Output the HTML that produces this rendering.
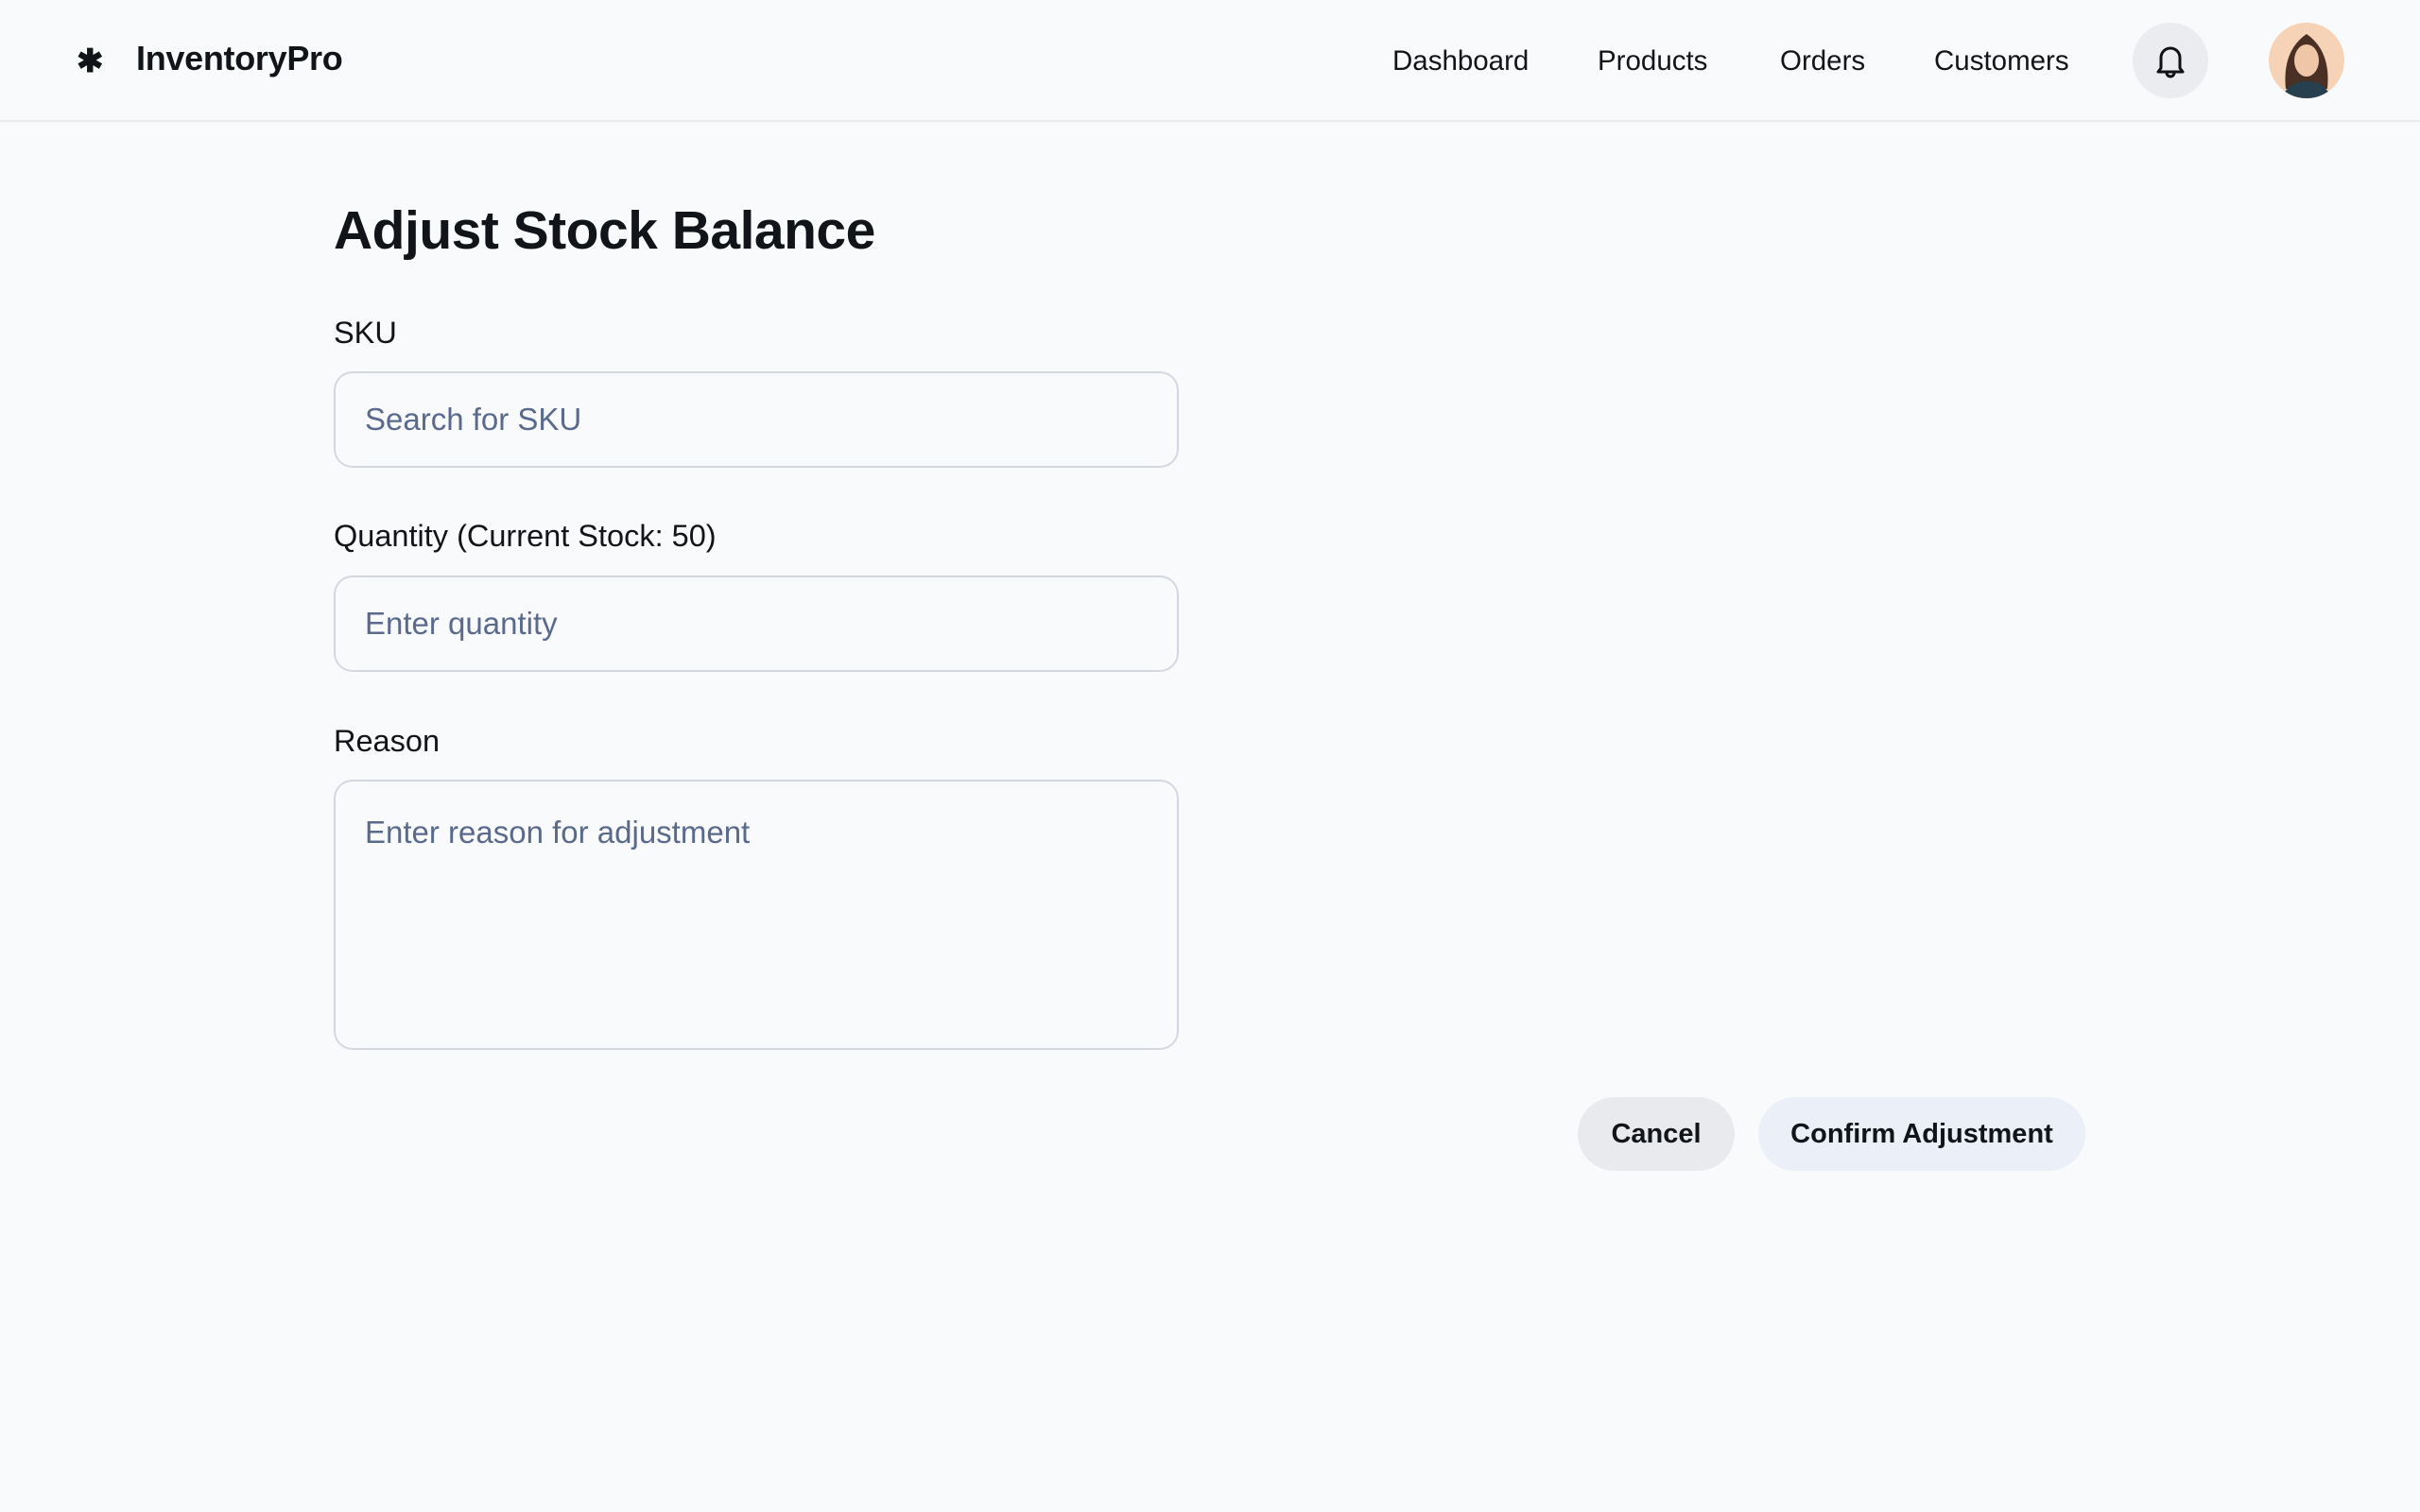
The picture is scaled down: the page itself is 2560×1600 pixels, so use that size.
<!DOCTYPE html>
<html><head><meta charset="utf-8"><style>
*{box-sizing:border-box;margin:0;padding:0}
body{width:2560px;height:1600px;background:#f9fafb;font-family:"Liberation Sans",sans-serif;color:#111418;position:relative;overflow:hidden}
header{position:absolute;left:0;top:0;width:2560px;height:129px;border-bottom:2px solid #e8eaee}
.abs{position:absolute}
.nav{font-size:29.5px;top:48px}
.lbl{font-size:32.5px;left:353px}
.inp{position:absolute;left:353px;width:894px;border:2px solid #d3d7e3;border-radius:20px;background:#f9fafb;color:#5a6a8c;font-size:33px;padding-left:31px}
.btn{position:absolute;top:1161px;height:78px;border-radius:39px;font-weight:bold;font-size:29px;display:flex;align-items:center;justify-content:center}
</style></head><body>
<header>
<div class="abs" style="left:81px;top:48px;font-size:34px;font-weight:bold;line-height:34px">&#10033;</div>
<div class="abs" style="left:144px;top:41px;font-size:36px;font-weight:bold;letter-spacing:-0.3px">InventoryPro</div>
<div class="abs nav" style="left:1473px">Dashboard</div>
<div class="abs nav" style="left:1690px">Products</div>
<div class="abs nav" style="left:1883px">Orders</div>
<div class="abs nav" style="left:2046px">Customers</div>
<div class="abs" style="left:2256px;top:24px;width:80px;height:80px;border-radius:50%;background:#eaecf0">
<svg width="80" height="80" viewBox="0 0 80 80"><path d="M30 48 V37 a10 10 0 0 1 20 0 V48 l3 4 H27 z" fill="none" stroke="#111" stroke-width="3" stroke-linejoin="round"/><path d="M36 53 a4 4 0 0 0 8 0" fill="none" stroke="#111" stroke-width="3"/></svg>
</div>
<div class="abs" style="left:2400px;top:24px;width:80px;height:80px;border-radius:50%;background:#f6d3b6;overflow:hidden">
<svg width="80" height="80" viewBox="0 0 80 80"><path d="M18 70 Q14 30 40 12 Q66 30 62 70 z" fill="#4a3024"/><ellipse cx="40" cy="40" rx="13" ry="17" fill="#f0c6a8"/><path d="M14 80 Q20 62 40 62 Q60 62 66 80 z" fill="#26404f"/></svg>
</div>
</header>
<div class="abs" style="left:353px;top:211px;font-size:57px;font-weight:bold;letter-spacing:-0.5px">Adjust Stock Balance</div>
<div class="abs lbl" style="top:334px">SKU</div>
<div class="inp" style="top:393px;height:102px;line-height:98px">Search for SKU</div>
<div class="abs lbl" style="top:549px">Quantity (Current Stock: 50)</div>
<div class="inp" style="top:609px;height:102px;line-height:98px">Enter quantity</div>
<div class="abs lbl" style="top:766px">Reason</div>
<div class="inp" style="top:825px;height:286px;padding-top:34px;line-height:40px">Enter reason for adjustment</div>
<div class="btn" style="left:1669px;width:166px;background:#e8eaee">Cancel</div>
<div class="btn" style="left:1860px;width:346px;background:#eaeff8">Confirm Adjustment</div>
</body></html>
